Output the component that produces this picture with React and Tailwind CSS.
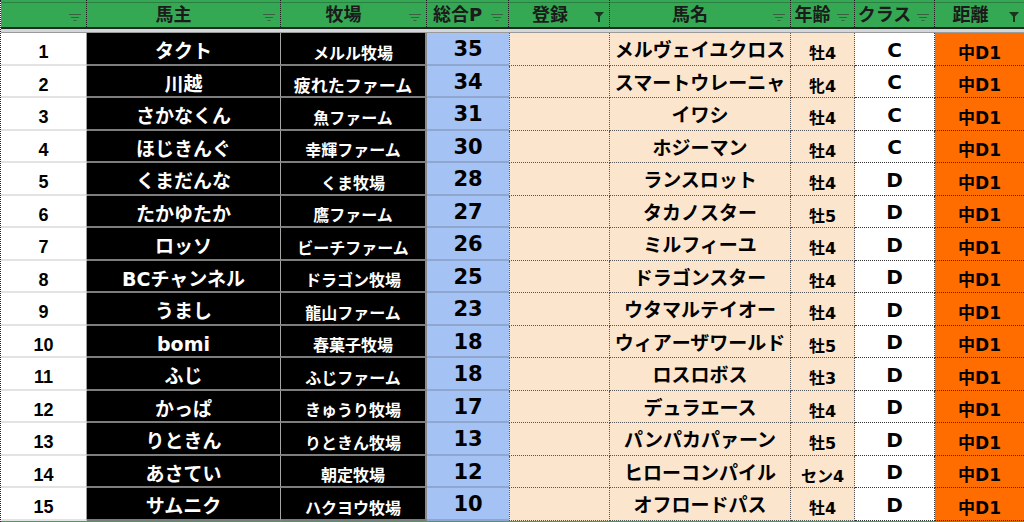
const rows = [
  ['1', 'タクト', 'メルル牧場', '35', 'メルヴェイユクロス', '牡4', 'C'],
  ['2', '川越', '疲れたファーム', '34', 'スマートウレーニャ', '牝4', 'C'],
  ['3', 'さかなくん', '魚ファーム', '31', 'イワシ', '牡4', 'C'],
  ['4', 'ほじきんぐ', '幸輝ファーム', '30', 'ホジーマン', '牡4', 'C'],
  ['5', 'くまだんな', 'くま牧場', '28', 'ランスロット', '牡4', 'D'],
  ['6', 'たかゆたか', '鷹ファーム', '27', 'タカノスター', '牡5', 'D'],
  ['7', 'ロッソ', 'ビーチファーム', '26', 'ミルフィーユ', '牡4', 'D'],
  ['8', 'BCチャンネル', 'ドラゴン牧場', '25', 'ドラゴンスター', '牡4', 'D'],
  ['9', 'うまし', '龍山ファーム', '23', 'ウタマルテイオー', '牡4', 'D'],
  ['10', 'bomi', '春菓子牧場', '18', 'ウィアーザワールド', '牡5', 'D'],
  ['11', 'ふじ', 'ふじファーム', '18', 'ロスロボス', '牡3', 'D'],
  ['12', 'かっぱ', 'きゅうり牧場', '17', 'デュラエース', '牡4', 'D'],
  ['13', 'りときん', 'りときん牧場', '13', 'パンパカパァーン', '牡5', 'D'],
  ['14', 'あさてい', '朝定牧場', '12', 'ヒローコンパイル', 'セン4', 'D'],
  ['15', 'サムニク', 'ハクヨウ牧場', '10', 'オフロードパス', '牡4', 'D'],
];

const FilterIcon = () => (
  <svg width="12" height="8" viewBox="0 0 12 8" className="shrink-0">
    <rect x="0" y="0" width="12" height="1" fill="#3f5f45" />
    <rect x="2" y="3" width="8" height="1" fill="#3f5f45" />
    <rect x="4.5" y="6" width="3" height="1" fill="#3f5f45" />
  </svg>
);

const ActiveFilter = () => (
  <svg width="10" height="10" viewBox="0 0 10 10" className="shrink-0">
    <path d="M0 0H10L6 4.5V10H4V4.5Z" fill="#17361d" />
  </svg>
);

const headers = [
  { label: '', w: 'w-[86px]' },
  { label: '馬主', w: 'w-[194px]' },
  { label: '牧場', w: 'w-[146px]' },
  { label: '総合P', w: 'w-[82px]' },
  { label: '登録', w: 'w-[101px]', active: true },
  { label: '馬名', w: 'w-[181px]' },
  { label: '年齢', w: 'w-[64px]' },
  { label: 'クラス', w: 'w-[80px]' },
  { label: '距離', w: 'w-[89px]', active: true, last: true },
];

const App = () => {
  return (
    <div className="w-[1024px] h-[522px] overflow-hidden bg-white border-l border-dotted border-[#222] font-['DejaVu_Sans','Noto_Sans_CJK_JP',sans-serif] font-bold">
      {/* header */}
      <div className="flex h-[27px] bg-[#35a853] shadow-[inset_0_2px_0_#35a853,inset_0_3px_0_#2a7f43] text-[18px] text-[#1b1b1b]">
        {headers.map((h, i) => (
          <div
            key={i}
            className={`${h.w} flex items-center pr-[5px] ${h.last ? '' : 'border-r border-dotted border-[#1e1e1e]'}`}
          >
            <span className="flex-1 text-center leading-none pt-[3px] whitespace-nowrap">{h.label}</span>
            <div className="self-end mb-[5px] ml-[3px]">
              {h.active ? <ActiveFilter /> : <FilterIcon />}
            </div>
          </div>
        ))}
      </div>
      <div className="h-[2px] bg-[#1d2b20]" />
      <div className="h-[3px] bg-[#d3d6da]" />
      <div className="h-px bg-[#9a9a9a]" />

      {/* body */}
      {rows.map((r) => (
        <div key={r[0]} className="flex h-[32.5px]">
          <div className="w-[86px] flex items-center justify-center bg-white border-b-2 border-[#e3e3e3] border-r border-r-[#9b9b9b] font-['Liberation_Sans',sans-serif] text-[18px] text-black leading-none pt-[8px]">
            {r[0]}
          </div>
          <div className="w-[194px] flex items-center justify-center bg-black border-b-2 border-[#7d7d7d] border-r border-r-[#a5a5a5] text-[19px] text-white leading-none pt-[7px] whitespace-nowrap">
            {r[1]}
          </div>
          <div className={`w-[146px] flex items-center justify-center bg-black border-b-2 border-[#7d7d7d] border-r-2 border-r-[#8a8a8a] ${r[0] === '2' ? 'text-[17px]' : 'text-[16px]'} text-white leading-none pt-[11px] whitespace-nowrap`}>
            {r[2]}
          </div>
          <div className="w-[82px] flex items-center justify-center bg-[#a4c2f4] border-b-2 border-[#8fa7cf] text-[21px] text-black leading-none pt-[3px]">
            {r[3]}
          </div>
          <div className="w-[101px] bg-[#fce5cd] border-l border-r border-b border-dotted border-[#555]" />
          <div className="w-[181px] flex items-center justify-center bg-[#fce5cd] border-r border-b border-dotted border-[#555] text-[19px] text-black leading-none pt-[4px] whitespace-nowrap">
            {r[4]}
          </div>
          <div className="w-[64px] flex items-center justify-center bg-[#fce5cd] border-r border-b border-dotted border-[#555] text-[16px] text-black leading-none pt-[11px] whitespace-nowrap">
            {r[5]}
          </div>
          <div className="w-[80px] flex items-center justify-center bg-white border-r border-b border-dotted border-[#333] text-[20px] text-black leading-none pt-[2px]">
            {r[6]}
          </div>
          <div className="w-[89px] flex items-center justify-center bg-[#ff6d01] border-b border-dotted border-[#333] text-[17px] text-black leading-none pt-[9px]">
            中D1
          </div>
        </div>
      ))}
      <div className="h-[3px] bg-[#35a853]" />
    </div>
  );
};

export default App;
